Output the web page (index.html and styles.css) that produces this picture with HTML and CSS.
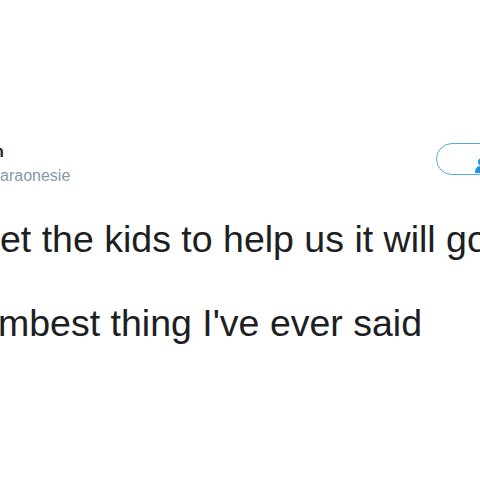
FILE: index.html
```html
<!DOCTYPE html>
<html lang="en">
<head>
    <meta charset="UTF-8">
    <meta name="viewport" content="width=device-width, initial-scale=1.0">
    <title>Tweet</title>
    <link rel="stylesheet" href="styles.css">
</head>
<body>
    <div class="tweet">
        <div class="head">
            <div class="user">
                <div class="name">n</div>
                <div class="handle">araonesie</div>
            </div>
            <button class="follow">
                <svg class="follow-icon" width="18" height="15" viewBox="0 0 18 15">
                    <circle cx="6.5" cy="4" r="3.6" fill="#1b95e0"/>
                    <path d="M0 15 C0 10 2.5 8 6.5 8 C10.5 8 13 10 13 15 Z" fill="#1b95e0"/>
                    <path d="M15 3 V9 M12 6 H18" stroke="#1b95e0" stroke-width="2"/>
                </svg>
                <span>Follow</span>
            </button>
        </div>
        <p class="text">et the kids to help us it will go</p>
        <p class="text text-second">mbest thing I've ever said</p>
    </div>
</body>
</html>
```

FILE: styles.css
```css
html, body {
    margin: 0;
    padding: 0;
    overflow: hidden;
    background-color: #ffffff;
}
body {
    font-family: "Liberation Sans", Arial, sans-serif;
    width: 480px;
    height: 480px;
}
.tweet {
    padding-top: 142px;
}
.head {
    display: flex;
    align-items: flex-start;
}
.user {
    width: 436px;
    flex-shrink: 0;
}
.name {
    font-size: 16px;
    line-height: 20px;
    font-weight: bold;
    color: #1c2022;
    margin-left: -6px;
}
.handle {
    font-size: 16px;
    line-height: 20px;
    color: #8899a6;
    margin-top: 4px;
}
.follow {
    flex-shrink: 0;
    display: flex;
    align-items: flex-start;
    gap: 6px;
    width: 130px;
    height: 32px;
    margin-top: 1px;
    padding: 14px 0 0 38px;
    border: 1.5px solid #5aa9dd;
    border-radius: 16px;
    background-color: #ffffff;
    color: #1b95e0;
    font-family: "Liberation Sans", Arial, sans-serif;
    font-size: 14px;
    font-weight: bold;
    box-sizing: border-box;
}
.follow-icon {
    flex-shrink: 0;
}
.text {
    margin: 31px 0 0 0;
    font-size: 37.5px;
    line-height: 45px;
    color: #1c2022;
    white-space: nowrap;
}
.text-second {
    margin-top: 39px;
    margin-left: -2px;
}
```
